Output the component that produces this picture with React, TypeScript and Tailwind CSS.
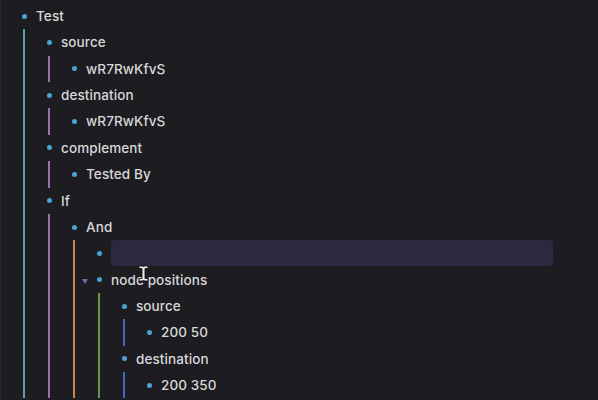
type Item = {
  label: string;
  line?: string;
  children?: Item[];
  editing?: boolean;
  collapsible?: boolean;
  cursor?: boolean;
};

const tree: Item = {
  label: "Test",
  line: "border-[#5f9eab]",
  children: [
    { label: "source", line: "border-[#9b6fb0]", children: [{ label: "wR7RwKfvS" }] },
    { label: "destination", line: "border-[#9b6fb0]", children: [{ label: "wR7RwKfvS" }] },
    { label: "complement", line: "border-[#9b6fb0]", children: [{ label: "Tested By" }] },
    {
      label: "If",
      line: "border-[#9b6fb0]",
      children: [
        {
          label: "And",
          line: "border-[#c48a46]",
          children: [
            { label: "", editing: true },
            {
              label: "node positions",
              collapsible: true,
              cursor: true,
              line: "border-[#5f9b4c]",
              children: [
                { label: "source", line: "border-[#3f6bc4]", children: [{ label: "200 50" }] },
                { label: "destination", line: "border-[#3f6bc4]", children: [{ label: "200 350" }] },
              ],
            },
          ],
        },
      ],
    },
  ],
};

// mouse pointer sitting over the "node positions" label
function IBeam() {
  return (
    <svg
      className="pointer-events-none absolute left-[27px] top-[-5px]"
      width="11"
      height="17"
      viewBox="0 0 11 17"
    >
      <path
        d="M1 1h3.5l1 1 1-1H10v2.5H7v10h3V16H6.5l-1-1-1 1H1v-2.5h3v-10H1z"
        fill="#ececec"
        stroke="#1a1a1a"
        strokeWidth="0.9"
      />
    </svg>
  );
}

function Node({ item }: { item: Item }) {
  return (
    <div>
      <div className="relative flex h-[26.36px] items-center">
        {item.collapsible && (
          <span className="absolute left-[-12px] top-[12px] h-0 w-0 border-x-[3.5px] border-t-[5px] border-x-transparent border-t-[#7a68a6]" />
        )}
        <span className="flex w-[10px] shrink-0 justify-center">
          <span className="h-[5px] w-[5px] rounded-full bg-[#4aa3d6]" />
        </span>
        {item.editing ? (
          <div className="ml-[7px] h-[26px] w-[442px] rounded-[4px] bg-[#2a2940]" />
        ) : (
          <span className="relative ml-[7px] text-[13.5px] font-medium tracking-[0.1px] text-[#d8d8d8]">
            {item.label}
            {item.cursor && <IBeam />}
          </span>
        )}
      </div>
      {item.children && (
        <div className={`ml-[4px] border-l-2 pl-[19px] ${item.line}`}>
          {item.children.map((c, i) => (
            <Node key={i} item={c} />
          ))}
        </div>
      )}
    </div>
  );
}

export default function App() {
  return (
    <div className="h-[400px] w-[598px] overflow-hidden border-l border-[#3a1b22] bg-[#1c1c21] pl-[18px] pt-[3px] font-['Inter','Liberation_Sans',sans-serif] antialiased">
      <Node item={tree} />
    </div>
  );
}
